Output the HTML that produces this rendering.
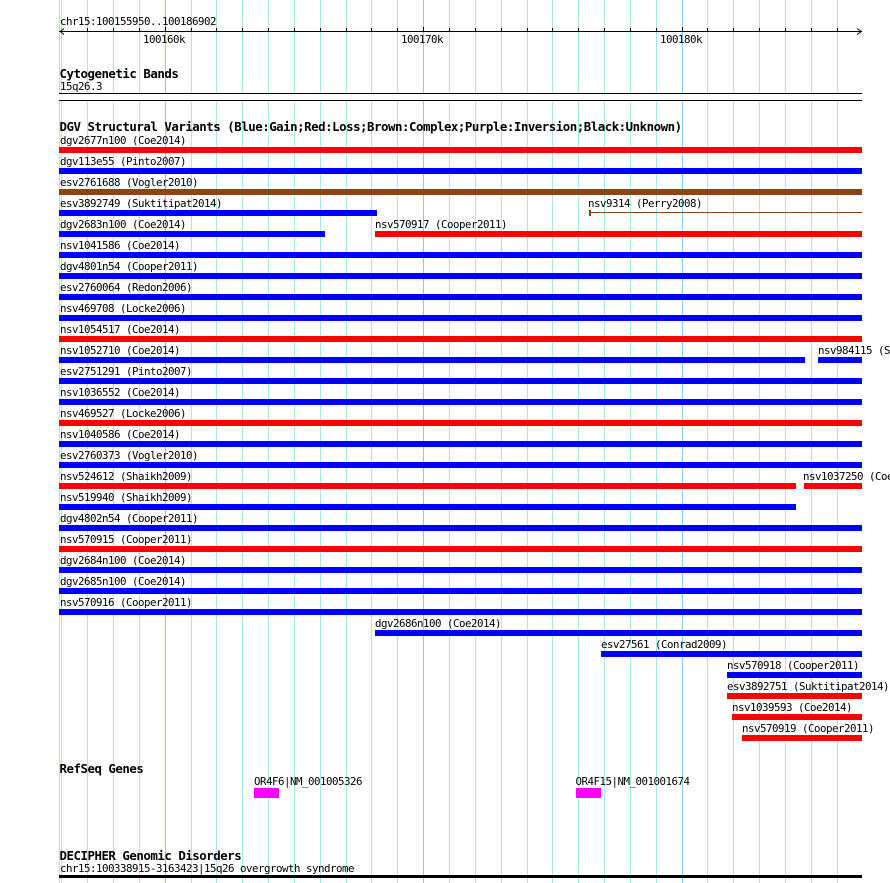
<!DOCTYPE html>
<html>
<head>
<meta charset="utf-8">
<style>
html,body{margin:0;padding:0;background:#fff;width:890px;height:883px;overflow:hidden}
svg{display:block}
rect,line{shape-rendering:crispEdges}
text{font-family:"DejaVu Sans Mono","Liberation Mono",monospace;font-size:10.8px;fill:#000;letter-spacing:-0.5px;white-space:pre}
text.b{font-weight:bold;font-size:12.4px;letter-spacing:-0.47px}
</style>
</head>
<body>
<svg width="890" height="883" viewBox="0 0 890 883" xmlns="http://www.w3.org/2000/svg">
<g fill="#a8e8ec">
<rect x="59" y="0" width="1" height="883"/><rect x="61" y="0" width="1" height="883"/><rect x="87" y="0" width="1" height="883"/><rect x="113" y="0" width="1" height="883"/><rect x="139" y="0" width="1" height="883"/><rect x="191" y="0" width="1" height="883"/><rect x="216" y="0" width="1" height="883"/><rect x="242" y="0" width="1" height="883"/><rect x="268" y="0" width="1" height="883"/><rect x="294" y="0" width="1" height="883"/><rect x="320" y="0" width="1" height="883"/><rect x="346" y="0" width="1" height="883"/><rect x="371" y="0" width="1" height="883"/><rect x="397" y="0" width="1" height="883"/><rect x="449" y="0" width="1" height="883"/><rect x="475" y="0" width="1" height="883"/><rect x="501" y="0" width="1" height="883"/><rect x="527" y="0" width="1" height="883"/><rect x="552" y="0" width="1" height="883"/><rect x="578" y="0" width="1" height="883"/><rect x="604" y="0" width="1" height="883"/><rect x="630" y="0" width="1" height="883"/><rect x="656" y="0" width="1" height="883"/><rect x="707" y="0" width="1" height="883"/><rect x="733" y="0" width="1" height="883"/><rect x="759" y="0" width="1" height="883"/><rect x="785" y="0" width="1" height="883"/><rect x="811" y="0" width="1" height="883"/><rect x="837" y="0" width="1" height="883"/>
</g>
<g fill="#87cfe8">
<rect x="165" y="0" width="1" height="883"/><rect x="423" y="0" width="1" height="883"/><rect x="682" y="0" width="1" height="883"/>
</g>

<!-- ruler -->
<text x="60" y="25">chr15:100155950..100186902</text>
<rect x="59" y="31" width="803" height="1" fill="#000"/>
<g fill="#000">
<rect x="87" y="28" width="1" height="3"/><rect x="113" y="28" width="1" height="3"/><rect x="139" y="28" width="1" height="3"/><rect x="165" y="27" width="1" height="4"/><rect x="191" y="28" width="1" height="3"/><rect x="216" y="28" width="1" height="3"/><rect x="242" y="28" width="1" height="3"/><rect x="268" y="28" width="1" height="3"/><rect x="294" y="28" width="1" height="3"/><rect x="320" y="28" width="1" height="3"/><rect x="346" y="28" width="1" height="3"/><rect x="371" y="28" width="1" height="3"/><rect x="397" y="28" width="1" height="3"/><rect x="423" y="27" width="1" height="4"/><rect x="449" y="28" width="1" height="3"/><rect x="475" y="28" width="1" height="3"/><rect x="501" y="28" width="1" height="3"/><rect x="527" y="28" width="1" height="3"/><rect x="552" y="28" width="1" height="3"/><rect x="578" y="28" width="1" height="3"/><rect x="604" y="28" width="1" height="3"/><rect x="630" y="28" width="1" height="3"/><rect x="656" y="28" width="1" height="3"/><rect x="682" y="27" width="1" height="4"/><rect x="707" y="28" width="1" height="3"/><rect x="733" y="28" width="1" height="3"/><rect x="759" y="28" width="1" height="3"/><rect x="785" y="28" width="1" height="3"/><rect x="811" y="28" width="1" height="3"/><rect x="837" y="28" width="1" height="3"/>
</g>
<path d="M64 28.5 L60.5 31.5 L64 34.5 M857 28.5 L861.5 31.5 L857 34.5" fill="none" stroke="#000" stroke-width="1"/>
<text x="143" y="43">100160k</text>
<text x="401" y="43">100170k</text>
<text x="660" y="43">100180k</text>

<!-- cytogenetic -->
<text class="b" x="59.5" y="78">Cytogenetic Bands</text>
<text x="60" y="90">15q26.3</text>
<rect x="59" y="93" width="803" height="8" fill="#fff"/>
<rect x="59" y="93" width="803" height="1" fill="#000"/>
<rect x="59" y="100" width="803" height="1" fill="#000"/>

<!-- DGV -->
<text class="b" x="59.5" y="131">DGV Structural Variants (Blue:Gain;Red:Loss;Brown:Complex;Purple:Inversion;Black:Unknown)</text>

<text x="60" y="144">dgv2677n100 (Coe2014)</text><rect x="59" y="147" width="803" height="6" fill="#f00"/>
<text x="60" y="165">dgv113e55 (Pinto2007)</text><rect x="59" y="168" width="803" height="6" fill="#00f"/>
<text x="60" y="186">esv2761688 (Vogler2010)</text><rect x="59" y="189" width="803" height="6" fill="#8b4513"/>
<text x="60" y="207">esv3892749 (Suktitipat2014)</text><rect x="59" y="210" width="318" height="6" fill="#00f"/>
<text x="588" y="207">nsv9314 (Perry2008)</text><rect x="589" y="212" width="273" height="1" fill="#8b4513"/><rect x="589" y="210" width="2" height="6" fill="#8b4513"/>
<text x="60" y="228">dgv2683n100 (Coe2014)</text><rect x="59" y="231" width="266" height="6" fill="#00f"/>
<text x="375" y="228">nsv570917 (Cooper2011)</text><rect x="375" y="231" width="487" height="6" fill="#f00"/>
<text x="60" y="249">nsv1041586 (Coe2014)</text><rect x="59" y="252" width="803" height="6" fill="#00f"/>
<text x="60" y="270">dgv4801n54 (Cooper2011)</text><rect x="59" y="273" width="803" height="6" fill="#00f"/>
<text x="60" y="291">esv2760064 (Redon2006)</text><rect x="59" y="294" width="803" height="6" fill="#00f"/>
<text x="60" y="312">nsv469708 (Locke2006)</text><rect x="59" y="315" width="803" height="6" fill="#00f"/>
<text x="60" y="333">nsv1054517 (Coe2014)</text><rect x="59" y="336" width="803" height="6" fill="#f00"/>
<text x="60" y="354">nsv1052710 (Coe2014)</text><rect x="59" y="357" width="746" height="6" fill="#00f"/>
<text x="818" y="354">nsv984115 (Shaikh2009)</text><rect x="818" y="357" width="44" height="6" fill="#00f"/>
<text x="60" y="375">esv2751291 (Pinto2007)</text><rect x="59" y="378" width="803" height="6" fill="#00f"/>
<text x="60" y="396">nsv1036552 (Coe2014)</text><rect x="59" y="399" width="803" height="6" fill="#00f"/>
<text x="60" y="417">nsv469527 (Locke2006)</text><rect x="59" y="420" width="803" height="6" fill="#f00"/>
<text x="60" y="438">nsv1040586 (Coe2014)</text><rect x="59" y="441" width="803" height="6" fill="#00f"/>
<text x="60" y="459">esv2760373 (Vogler2010)</text><rect x="59" y="462" width="803" height="6" fill="#00f"/>
<text x="60" y="480">nsv524612 (Shaikh2009)</text><rect x="59" y="483" width="737" height="6" fill="#f00"/>
<text x="803" y="480">nsv1037250 (Coe2014)</text><rect x="804" y="483" width="58" height="6" fill="#f00"/>
<text x="60" y="501">nsv519940 (Shaikh2009)</text><rect x="59" y="504" width="737" height="6" fill="#00f"/>
<text x="60" y="522">dgv4802n54 (Cooper2011)</text><rect x="59" y="525" width="803" height="6" fill="#00f"/>
<text x="60" y="543">nsv570915 (Cooper2011)</text><rect x="59" y="546" width="803" height="6" fill="#f00"/>
<text x="60" y="564">dgv2684n100 (Coe2014)</text><rect x="59" y="567" width="803" height="6" fill="#00f"/>
<text x="60" y="585">dgv2685n100 (Coe2014)</text><rect x="59" y="588" width="803" height="6" fill="#00f"/>
<text x="60" y="606">nsv570916 (Cooper2011)</text><rect x="59" y="609" width="803" height="6" fill="#00f"/>
<text x="375" y="627">dgv2686n100 (Coe2014)</text><rect x="375" y="630" width="487" height="6" fill="#00f"/>
<text x="601" y="648">esv27561 (Conrad2009)</text><rect x="601" y="651" width="261" height="6" fill="#00f"/>
<text x="727" y="669">nsv570918 (Cooper2011)</text><rect x="727" y="672" width="135" height="6" fill="#00f"/>
<text x="727" y="690">esv3892751 (Suktitipat2014)</text><rect x="727" y="693" width="135" height="6" fill="#f00"/>
<text x="732" y="711">nsv1039593 (Coe2014)</text><rect x="732" y="714" width="130" height="6" fill="#f00"/>
<text x="742" y="732">nsv570919 (Cooper2011)</text><rect x="742" y="735" width="120" height="6" fill="#f00"/>

<!-- RefSeq -->
<text class="b" x="59.5" y="773">RefSeq Genes</text>
<text x="254" y="785">OR4F6|NM_001005326</text><rect x="254" y="788" width="25" height="10" fill="#f0f"/>
<text x="575.5" y="785">OR4F15|NM_001001674</text><rect x="576" y="788" width="25" height="10" fill="#f0f"/>

<!-- DECIPHER -->
<text class="b" x="59.5" y="860">DECIPHER Genomic Disorders</text>
<text x="60" y="872">chr15:100338915-3163423|15q26 overgrowth syndrome</text>
<rect x="59" y="875" width="803" height="3" fill="#000"/>
</svg>
</body>
</html>
